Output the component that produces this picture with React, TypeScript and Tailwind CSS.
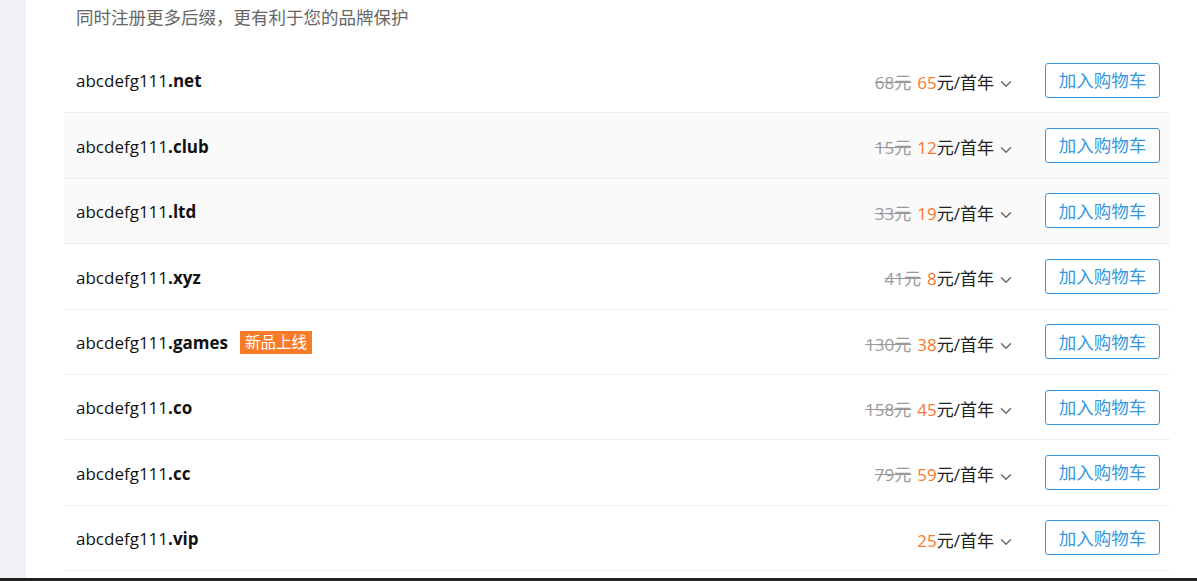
import { ChevronDown } from "lucide-react";

const domains = [
  { suffix: ".net", old: "68元", price: "65" },
  { suffix: ".club", old: "15元", price: "12" },
  { suffix: ".ltd", old: "33元", price: "19" },
  { suffix: ".xyz", old: "41元", price: "8" },
  { suffix: ".games", old: "130元", price: "38", badge: "新品上线" },
  { suffix: ".co", old: "158元", price: "45" },
  { suffix: ".cc", old: "79元", price: "59" },
  { suffix: ".vip", old: "", price: "25" },
];

const font = "font-['Open_Sans','Noto_Sans_CJK_SC',sans-serif]";

function DomainRow({
  suffix,
  old,
  price,
  badge,
  shaded,
}: {
  suffix: string;
  old: string;
  price: string;
  badge?: string;
  shaded: boolean;
}) {
  return (
    <div
      className={`flex items-center h-[65.4px] border-b border-[#efefef] pl-3 pr-[10px] ${
        shaded ? "bg-[#fafafa]" : "bg-white"
      }`}
    >
      <div className="flex items-center flex-1 pt-[2px]">
        <span className="text-[17px] text-[#111]">
          abcdefg111<span className="font-bold">{suffix}</span>
        </span>
        {badge && (
          <span className="ml-3 h-[23px] px-[5px] flex items-center bg-[#f97b27] text-white text-[15.5px]">
            {badge}
          </span>
        )}
      </div>
      <div className="flex items-center text-[17px] text-[#222] pt-[5px]">
        {old && (
          <span className="text-[#999] line-through decoration-[#999] mr-[6px]">
            {old}
          </span>
        )}
        <span className="text-[#f7782f]">{price}</span>
        <span>元/首年</span>
        <ChevronDown size={18} strokeWidth={1.8} className="text-[#666] ml-[3px] mt-[3px]" />
      </div>
      <button className="ml-[30px] w-[115px] h-[35px] border border-[#3598dc] rounded-[3px] text-[#3598dc] text-[17.5px] flex items-center justify-center bg-white">
        加入购物车
      </button>
    </div>
  );
}

export default function App() {
  return (
    <div className={`h-[581px] overflow-hidden flex flex-col bg-white ${font}`}>
      <div className="flex flex-1 min-h-0">
        <div className="w-[26px] shrink-0 bg-[#f0f2f5]" />
        <div className="flex-1 pl-[38px] pr-[27px]">
          <div className="h-[34px] flex items-center pl-3 text-[17.5px] text-[#666]">
            同时注册更多后缀，更有利于您的品牌保护
          </div>
          <div className="mt-[14px]">
            {domains.map((d, i) => (
              <DomainRow key={d.suffix} {...d} shaded={i === 1 || i === 2} />
            ))}
          </div>
        </div>
      </div>
      <div className="h-[3px] bg-[#222]" />
    </div>
  );
}
